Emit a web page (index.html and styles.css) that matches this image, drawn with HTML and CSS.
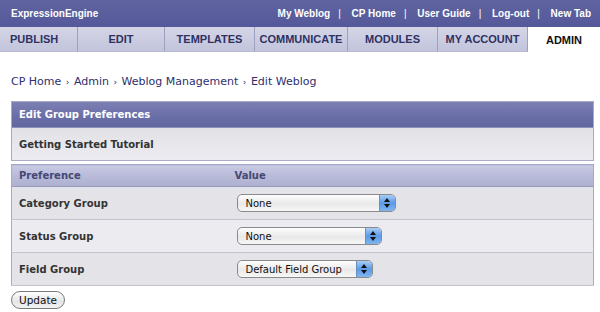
FILE: index.html
```html
<!DOCTYPE html>
<html lang="en">
<head>
    <meta charset="UTF-8">
    <title>ExpressionEngine - Edit Weblog</title>
    <link rel="stylesheet" href="styles.css">
</head>
<body>

    <div class="top-bar">
        <span class="site-name">ExpressionEngine</span>
        <div class="top-links">
            <a href="#">My Weblog</a><span class="sep">|</span>
            <a href="#">CP Home</a><span class="sep">|</span>
            <a href="#">User Guide</a><span class="sep">|</span>
            <a href="#">Log-out</a><span class="sep">|</span>
            <a href="#">New Tab</a>
        </div>
    </div>

    <div class="tabs">
        <a class="tab tab-publish" href="#">PUBLISH</a>
        <a class="tab tab-edit" href="#">EDIT</a>
        <a class="tab tab-templates" href="#">TEMPLATES</a>
        <a class="tab tab-communicate" href="#">COMMUNICATE</a>
        <a class="tab tab-modules" href="#">MODULES</a>
        <a class="tab tab-account" href="#">MY ACCOUNT</a>
        <a class="tab tab-admin active" href="#">ADMIN</a>
    </div>

    <div class="content">
        <div class="crumbs">
            <a href="#">CP Home</a> <span class="arrow">›</span>
            <a href="#">Admin</a> <span class="arrow">›</span>
            <a href="#">Weblog Management</a> <span class="arrow">›</span>
            <span>Edit Weblog</span>
        </div>

        <div class="box">
            <div class="box-head">Edit Group Preferences</div>
            <div class="box-row">Getting Started Tutorial</div>
        </div>

        <form>
            <table class="prefs">
                <tr class="prefs-head">
                    <th class="col-pref">Preference</th>
                    <th>Value</th>
                </tr>
                <tr class="row-a">
                    <td class="label">Category Group</td>
                    <td>
                        <div class="popup w-cat"><span>None</span><i class="stepper"></i></div>
                    </td>
                </tr>
                <tr class="row-b">
                    <td class="label">Status Group</td>
                    <td>
                        <div class="popup w-status"><span>None</span><i class="stepper"></i></div>
                    </td>
                </tr>
                <tr class="row-a">
                    <td class="label">Field Group</td>
                    <td>
                        <div class="popup w-field"><span>Default Field Group</span><i class="stepper"></i></div>
                    </td>
                </tr>
            </table>
            <button type="submit" class="update-btn">Update</button>
        </form>
    </div>

</body>
</html>
```

FILE: styles.css
```css
* {
    box-sizing: border-box;
    margin: 0;
    padding: 0;
}
body {
    font-family: 'DejaVu Sans', 'Liberation Sans', sans-serif;
    font-size: 10px;
    background: #fff;
    color: #333;
    width: 600px;
    height: 312px;
    overflow: hidden;
}
a {
    text-decoration: none;
    color: inherit;
}

/* top bar */
.top-bar {
    height: 27px;
    background: linear-gradient(#5f639f, #55599a);
    display: flex;
    align-items: center;
    justify-content: space-between;
    padding: 0 9px 0 11px;
    color: #fff;
    font-family: 'Liberation Sans', Arial, sans-serif;
    font-weight: bold;
    font-size: 10px;
}
.top-links .sep {
    margin: 0 8px;
    font-weight: normal;
}

/* tabs */
.tabs {
    display: flex;
    height: 25px;
    background: #55599a;
}
.tab {
    display: flex;
    align-items: center;
    justify-content: center;
    font-family: 'Liberation Sans', Arial, sans-serif;
    font-weight: bold;
    font-size: 11px;
    color: #2e3163;
    background: linear-gradient(#d4d5e6, #c2c4dc);
    border-right: 1px solid #9ea0c0;
    border-bottom: 1px solid #b9bbd3;
    white-space: nowrap;
}
.tab-publish { width: 78px; justify-content: flex-start; padding-left: 10px; }
.tab-edit { width: 87px; }
.tab-templates { width: 90px; }
.tab-communicate { width: 93px; }
.tab-modules { width: 90px; }
.tab-account { width: 90px; }
.tab-admin {
    flex: 1;
    background: #fff;
    border: none;
    color: #111;
}

/* content */
.content {
    padding: 0 6px 0 11px;
}
.crumbs {
    color: #2d2f6e;
    font-size: 11px;
    height: 49px;
    padding-top: 23px;
}
.crumbs .arrow {
    font-size: 9px;
    margin: 0 1px;
}

.box {
    border: 1px solid #a9aac6;
    margin-bottom: 3px;
}
.box-head {
    height: 26px;
    background: linear-gradient(#7b7fb2, #6a6ea8 60%, #63679f);
    color: #fff;
    font-weight: bold;
    display: flex;
    align-items: center;
    padding-left: 7px;
    border-bottom: 1px solid #8d90b8;
}
.box-row {
    height: 32px;
    background: linear-gradient(#e2e2e6, #ebebf1);
    font-weight: bold;
    display: flex;
    align-items: center;
    padding-left: 7px;
}

.prefs {
    width: 100%;
    border-collapse: collapse;
    border: 1px solid #a9aac6;
}
.prefs th {
    height: 22px;
    background: linear-gradient(#c9cae3, #b9bbd9 45%, #aeb0d0);
    color: #454874;
    text-align: left;
    font-weight: bold;
    padding-left: 7px;
    border-bottom: 1px solid #9899bf;
}
.prefs th.col-pref {
    width: 216px;
}
.prefs td {
    height: 33px;
    border-top: 1px solid #fff;
    border-bottom: 1px solid #c4c4d0;
    padding-left: 7px;
}
.prefs td.label {
    font-weight: bold;
}
.prefs td + td {
    padding-left: 9px;
}
.row-a td { background: #e4e4e8; }
.row-b td { background: #ececf0; }

/* mac style popup */
.popup {
    height: 18px;
    border: 1px solid #8a8a8a;
    border-radius: 5px;
    background: linear-gradient(#fdfdfd, #e9e9e9 55%, #f7f7f7);
    display: flex;
    align-items: center;
    justify-content: space-between;
    color: #111;
    padding-left: 8px;
    overflow: hidden;
    white-space: nowrap;
}
.w-cat { width: 159px; }
.w-status { width: 145px; }
.w-field { width: 136px; }
.stepper {
    width: 16px;
    height: 100%;
    background: linear-gradient(#a9cdf5, #5b9ae6 50%, #7fb5f0);
    border-left: 1px solid #6a8fc2;
    position: relative;
    flex-shrink: 0;
}
.stepper::before,
.stepper::after {
    content: "";
    position: absolute;
    left: 4px;
    border-left: 3.5px solid transparent;
    border-right: 3.5px solid transparent;
}
.stepper::before {
    top: 3px;
    border-bottom: 4px solid #111;
}
.stepper::after {
    bottom: 3px;
    border-top: 4px solid #111;
}

.update-btn {
    margin-top: 5px;
    height: 18px;
    padding: 0 7px;
    border: 1px solid #7a7a7a;
    border-radius: 9px;
    background: linear-gradient(#fff, #e5e5e5 60%, #f3f3f3);
    font-family: 'DejaVu Sans', sans-serif;
    font-size: 10.5px;
    color: #111;
}
```
